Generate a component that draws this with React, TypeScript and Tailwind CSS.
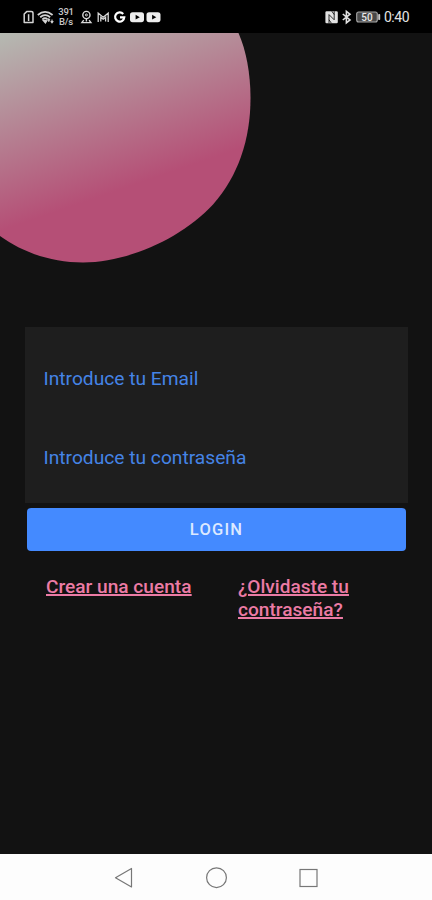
import React from 'react'

const StatusIcons: React.FC = () => (
  <div className="flex items-center">
    <svg width="36" height="16" viewBox="0 0 36 16" fill="none" stroke="#d4d4d4" strokeWidth="1.5">
      {/* SIM card */}
      <path d="M2.2 13.6V5L4.7 2.6H9.2Q11 2.6 11 4.3V13.6Z" strokeLinejoin="round" />
      <path d="M6.6 5.2V12" />
      {/* Wi-Fi */}
      <path d="M15.8 6Q23 -0.2 30.6 6M18.2 8.2Q23 4 28.2 8.2M20.4 10.4Q23 8.2 25.6 10.4" strokeWidth="1.8" />
      <path d="M21.4 11.5L23.4 13.8L24.6 11.8Z" fill="#d4d4d4" />
      <path d="M26.8 9.8V13M30 13.6V10.4M25.5 11.3L26.8 9.8L28 11.3M28.7 12.2L30 13.8L31.3 12.2" strokeWidth="1.1" />
    </svg>
    <div className="-ml-0.5 flex w-[20px] flex-col items-center text-[9.5px] leading-[10px] font-medium tracking-[-0.2px] text-[#c8c8c8]">
      <span>391</span>
      <span>B/s</span>
    </div>
    <svg className="ml-1" width="82" height="16" viewBox="0 0 82 16" fill="none" stroke="#d8d8d8" strokeWidth="1.4">
      {/* Location */}
      <circle cx="6.4" cy="6" r="3.6" />
      <circle cx="6.4" cy="6" r="1" strokeWidth="1" />
      <path d="M6.4 9.6V12.4M3.7 11.2L1.9 13.6H10.9L9.1 11.2" strokeWidth="1.4" />
      {/* Mail */}
      <path d="M18.2 13V4.2L23.2 8.2L28.2 4.2V13M20.8 12.6V8.4L23.2 10.2L25.6 8.4V12.6" strokeWidth="1.3" />
      {/* Google */}
      <path d="M43.2 5A4.6 4.6 0 1 0 44.3 8.3H40" stroke="#fff" strokeWidth="2.2" />
      {/* YouTube */}
      <rect x="50" y="3.2" width="14" height="10" rx="2.6" fill="#ededed" stroke="none" />
      <path d="M55.6 5.8V10.6L59.8 8.2Z" fill="#000" stroke="none" />
      <rect x="66.5" y="3.2" width="14" height="10" rx="2.6" fill="#ededed" stroke="none" />
      <path d="M72.1 5.8V10.6L76.3 8.2Z" fill="#000" stroke="none" />
    </svg>
  </div>
)

const SystemIcons: React.FC = () => (
  <div className="flex items-center">
    <svg width="31" height="16" viewBox="0 0 31 16" fill="none" stroke="#e2e2e2" strokeWidth="1.6">
      {/* NFC */}
      <rect x="0.4" y="2.2" width="12.4" height="12" rx="1.2" fill="#e2e2e2" stroke="none" />
      <path d="M4 14.2V5.6L9.2 10.8V2.2" stroke="#000" strokeWidth="0.8" />
      <path d="M6.8 2.2L9.2 5.6M4 10.8L6.4 14.2" stroke="#000" strokeWidth="0.8" />
      {/* Bluetooth */}
      <path d="M17.8 5L25 10.9L21.4 13.8V2.4L25 5.2L17.8 11" />
    </svg>
    <svg width="27" height="14" viewBox="0 0 27 14">
      <rect x="0.7" y="2" width="20.6" height="10" rx="2" fill="#484848" stroke="#a8a8a8" strokeWidth="1.1" />
      <rect x="22.2" y="4" width="2" height="6" rx="0.8" fill="#c8c8c8" />
      <text x="11" y="10.6" textAnchor="middle" fontSize="10" fontWeight="500" fill="#e8e8e8">50</text>
    </svg>
    <span className="ml-px text-[14px] leading-4 tracking-[-0.5px] text-[#e4e4e4]">0:40</span>
  </div>
)

const StatusBar: React.FC = () => (
  <header className="flex h-[33px] items-center justify-between bg-black pr-[23px] pl-[22px]">
    <StatusIcons />
    <SystemIcons />
  </header>
)

const Blob: React.FC = () => (
  <svg className="block" width="252" height="231" viewBox="0 33 252 231">
    <defs>
      <linearGradient id="blob" gradientUnits="userSpaceOnUse" x1="0" y1="33" x2="61" y2="210">
        <stop offset="0" stopColor="#b5bab2" />
        <stop offset="1" stopColor="#b54f76" />
      </linearGradient>
    </defs>
    <path
      d="M0 33H238.5C246 50 250.5 73 250.5 98C250.5 140 238 176 213 204.5C182 238 128 262.5 83 262.5C51 262.5 22 252 0 236Z"
      fill="url(#blob)"
    />
  </svg>
)

const NavigationBar: React.FC = () => (
  <nav className="flex h-[46px] items-center justify-center bg-[#fdfdfd] pt-px">
    <svg width="206" height="24" viewBox="0 0 206 24" fill="none" stroke="#777" strokeWidth="1.2">
      <path d="M18.5 2.5V21L2.5 11.7Z" strokeLinejoin="round" />
      <circle cx="103.5" cy="11.7" r="9.9" />
      <rect x="187" y="3.5" width="17" height="17" />
    </svg>
  </nav>
)

export default function App() {
  return (
    <div className="flex h-[900px] w-[432px] flex-col overflow-hidden bg-[#121212] font-['Roboto',sans-serif]">
      <StatusBar />

      <main className="flex-1">
        <Blob />

        <form className="mt-[63px] ml-[25px] w-[383px]" onSubmit={(e) => e.preventDefault()}>
          <div className="flex h-[176px] flex-col bg-[#1e1e1e] px-[18.5px] pt-[38px] text-[19.2px] leading-7 text-[#4584e6]">
            <label>Introduce tu Email</label>
            <label className="mt-[51px]">Introduce tu contraseña</label>
          </div>
          <button className="mx-[2px] mt-[5px] block h-[43px] w-[379px] rounded-[4px] bg-[#448aff] pt-0.5 text-[16.5px] font-medium tracking-[1.2px] text-[#dce9ff]">
            LOGIN
          </button>
        </form>

        <div className="mt-[25px] ml-[46px] grid grid-cols-[192px_150px] text-[19.1px] leading-[22.6px] font-medium text-[#ec7ba5] underline decoration-[1.5px]">
          <a href="#">Crear una cuenta</a>
          <a href="#">¿Olvidaste tu contraseña?</a>
        </div>
      </main>

      <NavigationBar />
    </div>
  )
}
